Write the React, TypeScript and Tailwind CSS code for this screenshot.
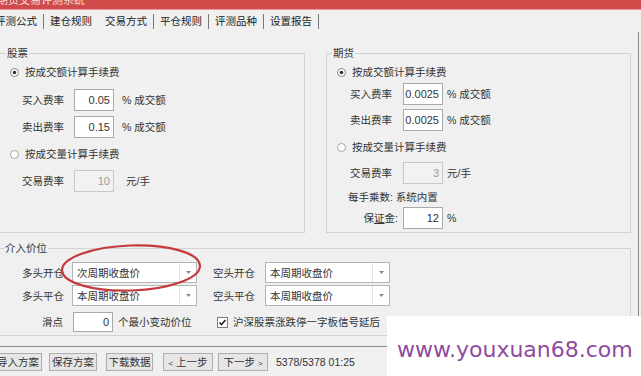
import React from 'react';

function Radio({ checked }: { checked?: boolean }) {
  return (
    <svg width="9" height="9" viewBox="0 0 9 9" className="shrink-0">
      <circle cx="4.5" cy="4.5" r="4" fill="#fff" stroke={checked ? '#858585' : '#a5a5a5'} />
      {checked && <circle cx="4.5" cy="4.5" r="1.8" fill="#333" />}
    </svg>
  );
}

function NumBox({ value, disabled, h = 'h-[22px]' }: { value: string; disabled?: boolean; h?: string }) {
  return (
    <div
      className={`w-[40px] ${h} shrink-0 border flex items-center justify-end pr-[3px] text-[11px] ${
        disabled ? 'bg-[#f2f2f2] border-[#c8c8c8] text-[#9a9a9a]' : 'bg-white border-[#a9a9a9] text-[#333]'
      }`}
    >
      {value}
    </div>
  );
}

function Combo({ value }: { value: string }) {
  return (
    <div className="w-[125px] h-[21px] shrink-0 bg-white border border-[#b4b4b4] flex items-stretch">
      <div className="flex-1 flex items-center pl-[4px]">{value}</div>
      <div className="w-[17px] border-l border-[#e4e4e4] flex items-center justify-center">
        <svg width="5" height="3" viewBox="0 0 5 3"><path d="M0 0h5L2.5 3z" fill="#8a8a8a" /></svg>
      </div>
    </div>
  );
}

function Check() {
  return (
    <svg width="11" height="11" viewBox="0 0 11 11" className="shrink-0">
      <rect x="0.5" y="0.5" width="10" height="10" fill="#fff" stroke="#7a7a7a" />
      <path d="M2.5 5.5l2 2 4-4.5" fill="none" stroke="#222" strokeWidth="1.6" />
    </svg>
  );
}

function Group({ label, className, children }: { label: string; className: string; children: React.ReactNode }) {
  return (
    <div className={`relative border border-[#d2d2d2] ${className}`}>
      <span className="absolute top-[-9px] px-[1px] h-[16px] leading-[16px] bg-[#f0f0f0] [left:var(--lx)]">{label}</span>
      {children}
    </div>
  );
}

const tabs = ['评测公式', '建仓规则', '交易方式', '平仓规则', '评测品种', '设置报告'];

export default function App() {
  return (
    <div className="relative w-[641px] h-[376px] overflow-hidden bg-[#f0f0f0] text-[10.5px] text-[#333] leading-[16px] [font-family:'Liberation_Sans','Noto_Sans_CJK_SC',sans-serif]">
      {/* title bar */}
      <div className="h-[9px] bg-[#cf4a48] overflow-hidden">
        <div className="-mt-[6px] -ml-[3px] text-[11px] leading-[12px] text-[#f6dede]">期货交易评测系统</div>
      </div>
      <div className="h-px bg-[#e59896]" />

      {/* tabs */}
      <div className="h-[22px] flex items-center -ml-[11px]">
        {tabs.map((t, i) => (
          <React.Fragment key={t}>
            <div className="w-[54px] text-center text-[#222]">{t}</div>
            <div className={`w-px h-[15px] ${i === 1 ? 'bg-transparent' : 'bg-[#777]'}`} />
          </React.Fragment>
        ))}
      </div>

      {/* tab panel */}
      <div className="-ml-[2px] w-[641px] h-[315px] pt-[21px] flex flex-col border-r border-b border-[#8c8c8c]">
        <div className="flex">
          <Group label="股票" className="w-[307px] h-[180px] [--lx:7px]">
            <div className="flex flex-col">
              <div className="mt-[10px] h-[16px] flex items-center pl-[11px] gap-[6px]">
                <Radio checked />
                <span>按成交额计算手续费</span>
              </div>
              <div className="mt-[9px] h-[22px] flex items-center pl-[23px]">
                <span className="w-[52px]">买入费率</span>
                <NumBox value="0.05" />
                <span className="ml-[8px]">% 成交额</span>
              </div>
              <div className="mt-[5px] h-[22px] flex items-center pl-[23px]">
                <span className="w-[52px]">卖出费率</span>
                <NumBox value="0.15" />
                <span className="ml-[8px]">% 成交额</span>
              </div>
              <div className="mt-[8px] h-[16px] flex items-center pl-[11px] gap-[6px]">
                <Radio />
                <span>按成交量计算手续费</span>
              </div>
              <div className="mt-[8px] h-[22px] flex items-center pl-[23px]">
                <span className="w-[52px]">交易费率</span>
                <NumBox value="10" disabled />
                <span className="ml-[12px]">元/手</span>
              </div>
            </div>
          </Group>

          <Group label="期货" className="ml-[21px] w-[305px] h-[180px] [--lx:5px]">
            <div className="flex flex-col">
              <div className="mt-[10px] h-[16px] flex items-center pl-[10px] gap-[6px]">
                <Radio checked />
                <span>按成交额计算手续费</span>
              </div>
              <div className="mt-[3px] h-[22px] flex items-center pl-[23px]">
                <span className="w-[53px]">买入费率</span>
                <NumBox value="0.0025" />
                <span className="ml-[4px]">% 成交额</span>
              </div>
              <div className="mt-[4px] h-[22px] flex items-center pl-[23px]">
                <span className="w-[53px]">卖出费率</span>
                <NumBox value="0.0025" />
                <span className="ml-[4px]">% 成交额</span>
              </div>
              <div className="mt-[8px] h-[16px] flex items-center pl-[10px] gap-[6px]">
                <Radio />
                <span>按成交量计算手续费</span>
              </div>
              <div className="mt-[7px] h-[22px] flex items-center pl-[23px]">
                <span className="w-[53px]">交易费率</span>
                <NumBox value="3" disabled />
                <span className="ml-[4px]">元/手</span>
              </div>
              <div className="mt-[5px] h-[16px] pl-[21px]">每手乘数: 系统内置</div>
              <div className="mt-[2px] h-[22px] flex items-center pl-[23px]">
                <span className="w-[53px] text-right pr-[5px]">
                  保<span className="underline">证</span>金:
                </span>
                <NumBox value="12" />
                <span className="ml-[4px]">%</span>
              </div>
            </div>
          </Group>
        </div>

        <Group label="介入价位" className="mt-[15px] w-[633px] h-[88px] [--lx:5px]">
          <div className="flex flex-col">
            <div className="mt-[13px] h-[21px] flex items-center pl-[23px]">
              <span className="w-[50px]">多头开仓</span>
              <Combo value="次周期收盘价" />
              <span className="ml-[16px] w-[52px]">空头开仓</span>
              <Combo value="本周期收盘价" />
            </div>
            <div className="mt-[2px] h-[21px] flex items-center pl-[23px]">
              <span className="w-[50px]">多头平仓</span>
              <Combo value="本周期收盘价" />
              <span className="ml-[16px] w-[52px]">空头平仓</span>
              <Combo value="本周期收盘价" />
            </div>
            <div className="mt-[6px] h-[20px] flex items-center pl-[23px]">
              <span className="w-[51px] text-right pr-[10px]">滑点</span>
              <NumBox value="0" h="h-[20px]" />
              <span className="ml-[5px] w-[99px]">个最小变动价位</span>
              <Check />
              <span className="ml-[5px]">沪深股票涨跌停一字板信号延后</span>
            </div>
          </div>
        </Group>
      </div>

      {/* bottom buttons */}
      <div className="mt-[6px] flex items-center">
        <button className="-ml-[6px] w-[48px] h-[18px] border border-[#adadad] bg-[#e6e6e6] leading-[16px]">导入方案</button>
        <button className="ml-[7px] w-[48px] h-[18px] border border-[#adadad] bg-[#e6e6e6] leading-[16px]">保存方案</button>
        <button className="ml-[9px] w-[47px] h-[18px] border border-[#adadad] bg-[#e6e6e6] leading-[16px]">下载数据</button>
        <button className="ml-[10px] w-[50px] h-[18px] border border-[#adadad] bg-[#e6e6e6] leading-[16px]">
          <span className="text-[8px]">&lt;</span> 上一步
        </button>
        <button className="ml-[5px] w-[50px] h-[18px] border border-[#adadad] bg-[#e6e6e6] leading-[16px]">
          下一步 <span className="text-[8px]">&gt;</span>
        </button>
        <span className="ml-[8px]">5378/5378 01:25</span>
      </div>

      {/* red annotation ellipse */}
      <svg className="absolute left-[58px] top-[242px]" width="150" height="54" viewBox="0 0 150 54">
        <ellipse cx="73" cy="26" rx="69" ry="22.5" transform="rotate(-2 73 26)" fill="none" stroke="#c53a3c" strokeWidth="2.2" />
      </svg>

      {/* watermark */}
      <div className="absolute left-[387px] top-[316px] w-[254px] h-[60px] bg-white pl-[10px] pt-[23px]">
        <div className="text-[22px] leading-none text-[#8f4b9f] [font-family:'DejaVu_Sans',sans-serif]">www.youxuan68.com</div>
      </div>
    </div>
  );
}
